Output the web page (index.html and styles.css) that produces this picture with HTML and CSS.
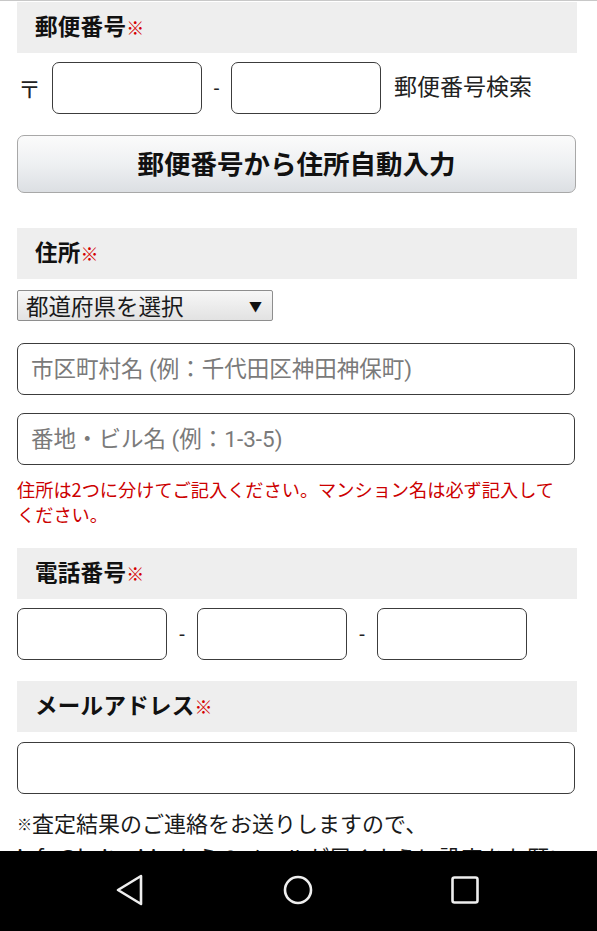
FILE: index.html
```html
<!DOCTYPE html>
<html lang="ja">
<head>
<meta charset="utf-8">
<title>フォーム</title>
<link rel="stylesheet" href="styles.css">
</head>
<body>
<div class="topline"></div>
<main class="form">
  <div class="label">郵便番号<span class="req">※</span></div>
  <div class="zip-row">
    <span class="zip-mark">〒</span>
    <input class="box box-zip" type="text">
    <span class="dash">-</span>
    <input class="box box-zip" type="text">
    <span class="zip-search">郵便番号検索</span>
  </div>
  <button class="auto-btn" type="button">郵便番号から住所自動入力</button>

  <div class="label label-addr">住所<span class="req">※</span></div>
  <div class="pref-select"><span>都道府県を選択</span><span class="arrow">▼</span></div>
  <input class="box box-full box-city" type="text" placeholder="市区町村名 (例：千代田区神田神保町)">
  <input class="box box-full box-street" type="text" placeholder="番地・ビル名 (例：1-3-5)">
  <p class="note">住所は2つに分けてご記入ください。マンション名は必ず記入してください。</p>

  <div class="label label-tel">電話番号<span class="req">※</span></div>
  <div class="tel-row">
    <input class="box box-tel" type="text">
    <span class="dash dash-tel">-</span>
    <input class="box box-tel" type="text">
    <span class="dash dash-tel">-</span>
    <input class="box box-tel" type="text">
  </div>

  <div class="label label-mail">メールアドレス<span class="req">※</span></div>
  <input class="box box-full box-mail" type="text">
  <p class="mail-note"><span class="small-mark">※</span>査定結果のご連絡をお送りしますので、<br>info@kaitori.jp からのメールが届くように設定をお願いします。</p>
</main>

<nav class="navbar">
  <svg class="nav-icon" width="30" height="34" viewBox="0 0 30 34">
    <path d="M26 3 L3 17 L26 31 Z" fill="none" stroke="#eeeeee" stroke-width="2.6" stroke-linejoin="round"/>
  </svg>
  <svg class="nav-icon" width="32" height="32" viewBox="0 0 32 32">
    <circle cx="16" cy="16" r="13" fill="none" stroke="#eeeeee" stroke-width="2.6"/>
  </svg>
  <svg class="nav-icon" width="30" height="30" viewBox="0 0 30 30">
    <rect x="2.5" y="2.5" width="25" height="25" rx="2" fill="none" stroke="#eeeeee" stroke-width="2.6"/>
  </svg>
</nav>
</body>
</html>
```
FILE: styles.css
```css
* { box-sizing: border-box; }
html, body {
  margin: 0;
  padding: 0;
  background: #ffffff;
}
body {
  font-family: Roboto, "Noto Sans CJK JP", sans-serif;
  color: #1a1a1a;
  overflow: hidden;
  height: 931px;
}
.topline {
  height: 1px;
  background: #c8c8c8;
}
.form {
  margin: 1px 20px 0 17px;
  display: flex;
  flex-direction: column;
  align-items: flex-start;
}
.label {
  width: 560px;
  height: 51px;
  background: #eeeeee;
  padding-left: 18px;
  padding-bottom: 5px;
  display: flex;
  align-items: center;
  font-family: "Noto Sans CJK JP", sans-serif;
  font-weight: 700;
  font-size: 22.5px;
  color: #111111;
  letter-spacing: 0.3px;
}
.req {
  color: #d40000;
  font-size: 18px;
  font-weight: 900;
  margin-left: 0;
  margin-top: 3px;
}
.box {
  height: 52px;
  border: 1px solid #3c3c3c;
  border-radius: 7px;
  background: #ffffff;
  font-family: Roboto, "Noto Sans CJK JP", sans-serif;
  font-size: 22.5px;
  padding: 0 13px;
  margin: 0;
  outline: none;
}
.box::placeholder { color: #7a7a7a; }
.zip-row {
  margin-top: 9px;
  display: flex;
  align-items: center;
}
.zip-mark {
  width: 35px;
  font-size: 23px;
  padding-left: 1px;
  font-family: "Noto Sans CJK JP", sans-serif;
  color: #222;
}
.box-zip { width: 150px; }
.dash {
  width: 29px;
  text-align: center;
  font-size: 20px;
  color: #222;
}
.zip-search {
  margin-left: 13px;
  font-family: "Noto Sans CJK JP", sans-serif;
  font-size: 23px;
  color: #222;
  margin-top: -6px;
}
.auto-btn {
  margin-top: 21px;
  width: 559px;
  height: 58px;
  border: 1px solid #a8a8a8;
  border-radius: 7px;
  background: linear-gradient(#fbfbfb 0%, #eef0f2 50%, #dcdfe3 100%);
  font-family: "Noto Sans CJK JP", sans-serif;
  font-weight: 700;
  font-size: 26.5px;
  color: #111111;
  padding: 0;
  padding-bottom: 4px;
  cursor: pointer;
}
.label-addr { margin-top: 35px; }
.pref-select {
  margin-top: 11px;
  width: 256px;
  height: 31px;
  border: 1px solid #8e8e8e;
  border-radius: 2px;
  background: linear-gradient(#f7f7f7, #e2e2e2);
  display: flex;
  align-items: center;
  justify-content: space-between;
  padding: 0 10px 0 8px;
  font-family: "Noto Sans CJK JP", sans-serif;
  font-size: 22.5px;
  color: #1a1a1a;
  line-height: 1;
}
.arrow {
  font-size: 13px;
  color: #111;
}
.box-full { width: 558px; }
.box-city { margin-top: 22px; }
.box-street { margin-top: 18px; }
.note {
  margin: 12px 0 0 0;
  width: 545px;
  font-family: "Noto Sans CJK JP", sans-serif;
  font-size: 18.2px;
  line-height: 25px;
  color: #cc0000;
}
.label-tel { margin-top: 21px; }
.tel-row {
  margin-top: 9px;
  display: flex;
  align-items: center;
}
.box-tel { width: 150px; }
.dash-tel { width: 30px; }
.label-mail { margin-top: 21px; }
.box-mail { margin-top: 10px; }
.mail-note {
  margin: 12px 0 0 0;
  width: 560px;
  font-family: "Noto Sans CJK JP", sans-serif;
  font-size: 22px;
  line-height: 33px;
  color: #1a1a1a;
}
.small-mark {
  font-size: 15px;
  vertical-align: 2px;
}
.navbar {
  position: fixed;
  left: 0;
  right: 0;
  bottom: 0;
  height: 80px;
  background: #000000;
  display: flex;
  align-items: center;
  justify-content: space-between;
  padding: 0 117px 2px 115px;
}
.nav-icon { display: block; }
```
